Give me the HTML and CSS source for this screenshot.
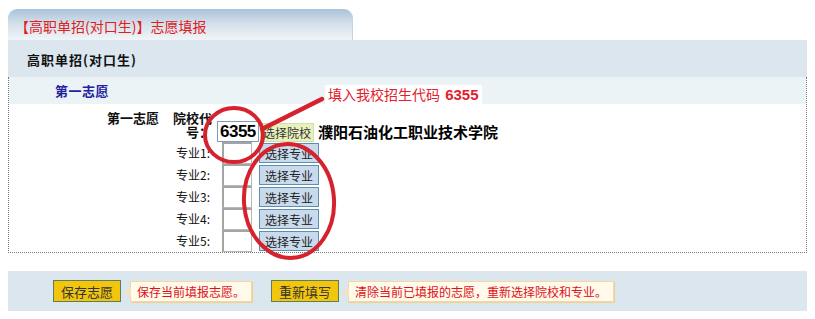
FILE: index.html
```html
<!DOCTYPE html>
<html lang="zh-CN">
<head>
    <meta charset="UTF-8">
    <title>高职单招志愿填报</title>
    <link rel="stylesheet" href="styles.css">
</head>
<body>
    <div class="page">
        <div class="tab">【高职单招(对口生)】志愿填报</div>
        <div class="panel">
            <div class="panel-head">高职单招(对口生)</div>
            <div class="form-box">
                <div class="section-title">第一志愿</div>
                <div class="rows">
                    <div class="row row-school">
                        <div class="row-name">第一志愿</div>
                        <div class="row-label bold">院校代号：</div>
                        <input type="text" class="code-input" value="6355">
                        <button class="btn-school">选择院校</button>
                        <span class="school-name">濮阳石油化工职业技术学院</span>
                    </div>
                    <div class="row row-major">
                        <div class="row-name"></div>
                        <div class="row-label">专业1:</div>
                        <input type="text" class="major-input">
                        <button class="btn-major">选择专业</button>
                    </div>
                    <div class="row row-major">
                        <div class="row-name"></div>
                        <div class="row-label">专业2:</div>
                        <input type="text" class="major-input">
                        <button class="btn-major">选择专业</button>
                    </div>
                    <div class="row row-major">
                        <div class="row-name"></div>
                        <div class="row-label">专业3:</div>
                        <input type="text" class="major-input">
                        <button class="btn-major">选择专业</button>
                    </div>
                    <div class="row row-major">
                        <div class="row-name"></div>
                        <div class="row-label">专业4:</div>
                        <input type="text" class="major-input">
                        <button class="btn-major">选择专业</button>
                    </div>
                    <div class="row row-major">
                        <div class="row-name"></div>
                        <div class="row-label">专业5:</div>
                        <input type="text" class="major-input">
                        <button class="btn-major">选择专业</button>
                    </div>
                </div>
            </div>
        </div>
        <div class="actions">
            <button class="btn-action">保存志愿</button>
            <span class="tip">保存当前填报志愿。</span>
            <button class="btn-action btn-reset">重新填写</button>
            <span class="tip">清除当前已填报的志愿，重新选择院校和专业。</span>
        </div>

        <!-- 红色标注 -->
        <div class="note">填入我校招生代码 <b>6355</b></div>
        <svg class="marks" width="815" height="319" viewBox="0 0 815 319">
            <ellipse cx="234" cy="135" rx="29" ry="27" fill="none" stroke="#d6222c" stroke-width="4"/>
            <line x1="262" y1="129" x2="322" y2="99" stroke="#d6222c" stroke-width="4.5" stroke-linecap="round"/>
            <ellipse cx="289" cy="201" rx="45" ry="57" fill="none" stroke="#d6222c" stroke-width="4" transform="rotate(-4 289 201)"/>
        </svg>
    </div>
</body>
</html>
```

FILE: styles.css
```css
* {
    margin: 0;
    padding: 0;
    box-sizing: border-box;
}

body {
    background: #fff;
    font-family: "Noto Sans CJK SC", "Liberation Sans", sans-serif;
    font-size: 12px;
    color: #222;
}

.page {
    position: relative;
    width: 815px;
    height: 319px;
    overflow: hidden;
    padding-top: 9px;
}

.tab {
    margin-left: 8px;
    width: 345px;
    height: 31px;
    padding: 4px 0 0 7px;
    line-height: 27px;
    font-size: 14px;
    color: #e0201c;
    border-radius: 9px 9px 0 0;
    border-right: 1px solid #c4d4e2;
    background: linear-gradient(#a9c2d9 0%, #d2dfea 45%, #f1f5f8 100%);
}

.panel {
    margin-left: 8px;
    width: 799px;
}

.panel-head {
    height: 37px;
    padding: 2px 0 0 19px;
    line-height: 35px;
    font-size: 13px;
    font-weight: bold;
    letter-spacing: 1px;
    color: #111;
    background-color: #dbe6ef;
}

.form-box {
    border-left: 1px dotted #777;
    border-right: 1px dotted #777;
    border-bottom: 1px dotted #777;
}

.section-title {
    height: 27px;
    padding-left: 46px;
    line-height: 27px;
    font-size: 13px;
    font-weight: bold;
    letter-spacing: 0.5px;
    color: #2222a0;
    background-color: #ebf3f7;
}

.rows {
    padding: 5px 0 0 98px;
}

.row {
    display: flex;
}

.row-school {
    height: 33px;
    align-items: flex-start;
}

.row-major {
    height: 22px;
    align-items: center;
}

.row-name {
    width: 65px;
    padding-top: 2px;
    line-height: 14px;
    font-size: 13px;
    font-weight: bold;
    color: #111;
}

.row-label {
    width: 40px;
    padding-right: 2px;
    text-align: right;
    line-height: 14px;
    color: #111;
}

.row-label.bold {
    padding: 2px 0 0;
    font-size: 13px;
    font-weight: bold;
}

.code-input {
    align-self: flex-end;
    margin-left: 5px;
    width: 42px;
    height: 21px;
    padding: 0 1px 0 2px;
    border: 1px solid #7f9db9;
    font-family: "Liberation Sans", sans-serif;
    font-size: 17px;
    font-weight: bold;
    letter-spacing: -0.5px;
    color: #000;
}

.btn-school {
    align-self: flex-end;
    margin-left: 1px;
    width: 54px;
    height: 19px;
    border: 1px solid #d6dca8;
    background-color: #e8f0bc;
    font-family: inherit;
    font-size: 12px;
    color: #333;
}

.school-name {
    align-self: flex-end;
    margin-left: 4px;
    line-height: 20px;
    font-size: 15px;
    font-weight: bold;
    color: #000;
}

.major-input {
    margin-left: 10px;
    width: 30px;
    height: 22px;
    border: 1px solid #b8b8b8;
    border-top: 2px solid #a4a4a4;
    border-left: 2px solid #a4a4a4;
    background: #fff;
}

.btn-major {
    margin-left: 7px;
    width: 60px;
    height: 20px;
    border: 1px solid #5e8fae;
    background-color: #c9daec;
    font-family: inherit;
    font-size: 12px;
    color: #222;
}

.actions {
    display: flex;
    align-items: center;
    margin: 18px 0 0 8px;
    width: 799px;
    height: 40px;
    padding-left: 45px;
    background-color: #dce6ef;
}

.btn-action {
    width: 68px;
    height: 22px;
    border: 1px solid #5a7f5a;
    background-color: #f3c60e;
    font-family: inherit;
    font-size: 13px;
    color: #333;
}

.btn-reset {
    margin-left: 19px;
}

.tip {
    position: relative;
    margin-left: 9px;
    height: 21px;
    padding: 0 6px;
    line-height: 19px;
    border: 1px solid #f2d7a2;
    background-color: #fffaea;
    box-shadow: 1px 1px 1px #ecd2a0;
    color: #e0101a;
}

.tip::before {
    content: "";
    position: absolute;
    left: -7px;
    top: 5px;
    border-top: 5px solid transparent;
    border-bottom: 5px solid transparent;
    border-right: 7px solid #f2e2c0;
}

.note {
    position: absolute;
    left: 325px;
    top: 85px;
    padding: 0 3px;
    line-height: 19px;
    background: #fff;
    font-size: 14px;
    color: #e4202c;
}

.note b {
    font-family: "Liberation Sans", sans-serif;
    font-size: 15px;
    margin-left: 2px;
}

.marks {
    position: absolute;
    left: 0;
    top: 0;
    pointer-events: none;
}
```
